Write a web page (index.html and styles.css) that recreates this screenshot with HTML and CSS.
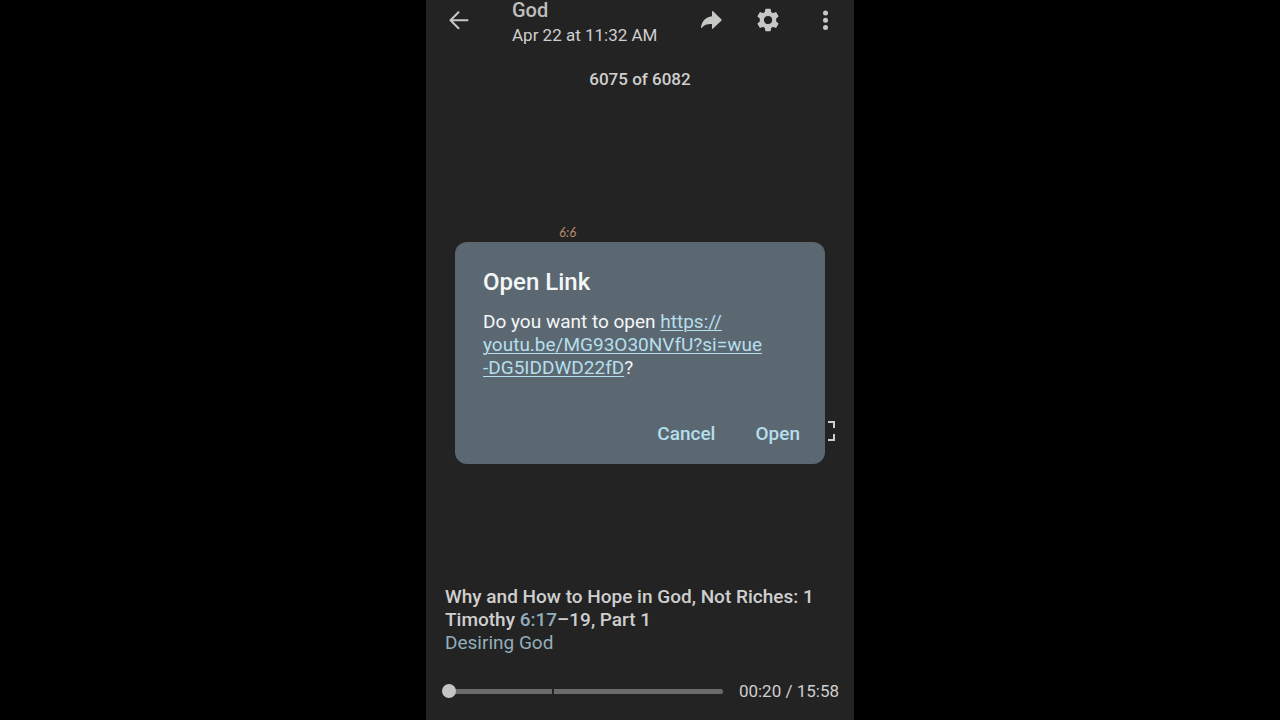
FILE: index.html
```html
<!DOCTYPE html>
<html lang="en">
<head>
<meta charset="utf-8">
<meta name="viewport" content="width=device-width, initial-scale=1">
<title>Open Link</title>
<link rel="stylesheet" href="styles.css">
</head>
<body>
<main class="phone">
  <header class="topbar">
    <button class="icon-button" type="button" aria-label="Back">
      <svg viewBox="0 0 24 24" fill="none" stroke="currentColor" stroke-width="2" stroke-linecap="round" stroke-linejoin="round"><path d="M20.5 12.3H4M11.5 4.3L3.5 12.3L11.5 20.3"/></svg>
    </button>
    <div class="heading">
      <h1 class="title">God</h1>
      <p class="date">Apr 22 at 11:32 AM</p>
    </div>
    <div class="actions">
      <button class="icon-button" type="button" aria-label="Share">
        <svg viewBox="0 0 24 24" fill="currentColor"><path d="M13 3.8Q13 2.4 14.1 3.3L22.3 11.2Q23 12 22.3 12.8L14.1 20.5Q13 21.4 13 20V16C8.500 15.800 5.300 16.800 2.800 19.700Q1.800 20.600 2 19.200C3 13 6.500 9 13 8.200Z"/></svg>
      </button>
      <button class="icon-button" type="button" aria-label="Settings">
        <svg viewBox="0 0 24 24" fill="currentColor" stroke="currentColor" stroke-width="1.400" stroke-linejoin="round" fill-rule="evenodd"><path d="M10 1.500h4l.6 3 2.300 1.300 2.900-1 2 3.500-2.300 2v3.400l2.300 2-2 3.500-2.900-1-2.300 1.300-.6 3h-4l-.6-3-2.300-1.300-2.900 1-2-3.500 2.300-2v-3.400l-2.300-2 2-3.500 2.900 1 2.300-1.300zM12 7.200a4.800 4.800 0 1 0 0 9.600 4.800 4.800 0 1 0 0-9.600z"/></svg>
      </button>
      <button class="icon-button" type="button" aria-label="More options">
        <svg viewBox="0 0 24 24" fill="currentColor"><circle cx="12.500" cy="5" r="2.500"/><circle cx="12.500" cy="12.300" r="2.500"/><circle cx="12.500" cy="19.600" r="2.500"/></svg>
      </button>
    </div>
  </header>
  <p class="counter">6075 of 6082</p>

  <section class="stage">
    <span class="annotation">6:6</span>
    <button class="fullscreen" type="button" aria-label="Full screen">
      <svg viewBox="0 0 20 20" fill="none" stroke="currentColor" stroke-width="2"><path d="M1 7V1H7M13 1H19V7M19 13V19H13M7 19H1V13"/></svg>
    </button>
  </section>

  <section class="caption">
    <h2 class="video-title">Why and How to Hope in God, Not Riches: 1 Timothy <a class="verse" href="#">6:17</a>–19, Part 1</h2>
    <a class="channel" href="#">Desiring God</a>
  </section>

  <div class="player">
    <input class="seek" type="range" min="0" max="958" value="0" aria-label="Seek">
    <span class="time">00:20 / 15:58</span>
  </div>

  <div class="overlay">
    <section class="dialog" role="dialog" aria-modal="true" aria-labelledby="dialog-title">
      <h2 class="dialog-title" id="dialog-title">Open Link</h2>
      <p class="dialog-text">Do you want to open <a class="link" href="https://youtu.be/MG93O30NVfU?si=wue-DG5IDDWD22fD">https://<br>youtu.be/MG93O30NVfU?si=wue<br>-DG5IDDWD22fD</a>?</p>
      <div class="dialog-actions">
        <button class="text-button" type="button">Cancel</button>
        <button class="text-button" type="button">Open</button>
      </div>
    </section>
  </div>
</main>
</body>
</html>
```
FILE: styles.css
```css
* {
  box-sizing: border-box;
}

body {
  margin: 0;
  background: #000;
  color: #cfcfcf;
  font-family: Roboto, "Liberation Sans", sans-serif;
}

h1, h2, p {
  margin: 0;
  font-weight: 500;
}

button {
  padding: 0;
  border: 0;
  background: none;
  color: inherit;
  font: inherit;
  cursor: pointer;
}

svg {
  display: block;
  width: 100%;
  height: 100%;
}

.phone {
  position: relative;
  display: flex;
  flex-direction: column;
  max-width: 428px;
  min-height: 100vh;
  margin: 0 auto;
  background: #232323;
}

.topbar {
  display: flex;
  align-items: flex-start;
  padding: 0 17px 0 21px;
}

.icon-button {
  width: 24px;
  height: 24px;
  margin-top: 8px;
  color: #c6c8c6;
}

.heading {
  flex: 1;
  margin-left: 41px;
}

.title {
  font-size: 20px;
  line-height: 20px;
  color: #bfbfbd;
}

.date {
  margin-top: 5px;
  font-size: 17px;
  font-weight: 400;
  line-height: 20px;
}

.actions {
  display: flex;
  gap: 33px;
}

.counter {
  margin-top: 24px;
  font-size: 17px;
  line-height: 20px;
  text-align: center;
}

.stage {
  flex: 1;
  display: flex;
  flex-direction: column;
  justify-content: space-between;
  padding: 136px 19px 144px 133px;
}

.annotation {
  color: #b48a6c;
  font-family: Lato, sans-serif;
  font-size: 13px;
  font-style: italic;
  line-height: 14px;
}

.fullscreen {
  align-self: flex-end;
  width: 20px;
  height: 20px;
}

.caption {
  padding: 0 19px;
  font-size: 19px;
  line-height: 23px;
}

.video-title {
  font-size: 19px;
}

.verse,
.channel {
  color: #93aebb;
  text-decoration: none;
}

.player {
  display: flex;
  align-items: center;
  gap: 16px;
  padding: 25px 15px 17px 16px;
}

.seek {
  flex: 1;
  min-width: 0;
  height: 24px;
  margin: 0;
  appearance: none;
  background: none;
}

.seek::-webkit-slider-runnable-track {
  height: 5px;
  border-radius: 3px;
  background: linear-gradient(to right, transparent 7px, #6b6c6a 7px, #6b6c6a 110px, #232323 110px, #232323 112px, #6b6c6a 112px);
}

.seek::-webkit-slider-thumb {
  width: 14px;
  height: 14px;
  margin-top: -5px;
  appearance: none;
  border-radius: 50%;
  background: #c4c4c4;
}

.time {
  font-size: 17px;
  line-height: 24px;
}

.overlay {
  position: absolute;
  inset: 0;
  display: flex;
  align-items: center;
  padding: 0 29px 14px;
}

.dialog {
  width: 100%;
  padding: 26px 25px 18px 28px;
  border-radius: 12px;
  background: #5c6871;
  color: #f4f7f8;
}

.dialog-title {
  font-size: 24px;
  line-height: 28px;
}

.dialog-text {
  margin-top: 14px;
  font-size: 19px;
  font-weight: 400;
  line-height: 23px;
}

.link {
  color: #b5dfec;
  text-decoration-thickness: 1px;
  text-underline-offset: 2px;
}

.dialog-actions {
  display: flex;
  justify-content: flex-end;
  gap: 40px;
  margin-top: 43px;
}

.text-button {
  color: #b5dfec;
  font-size: 19px;
  font-weight: 500;
  line-height: 24px;
}
```
